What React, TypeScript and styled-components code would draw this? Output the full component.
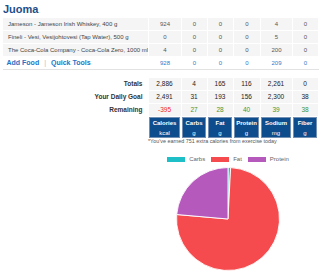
import React from "react";
import styled, { createGlobalStyle } from "styled-components";

const Global = createGlobalStyle`
  html, body { margin: 0; padding: 0; background: #fff; }
  body { font-family: "Liberation Sans", Arial, sans-serif; }
`;

const Page = styled.div`
  width: 320px;
  height: 272px;
  overflow: hidden;
  padding: 3px 2px 0 2px;
  box-sizing: border-box;
`;

const Title = styled.h2`
  margin: 0 0 2px 1px;
  font-size: 11px;
  line-height: 12px;
  font-weight: bold;
  color: #1b4f8c;
`;

const Table = styled.table`
  width: 316px;
  border-collapse: collapse;
  table-layout: fixed;
  font-size: 6px;
`;

const Row = styled.tr<{ $bg?: string }>`
  background: ${(p) => p.$bg ?? "transparent"};
`;

const NameCell = styled.td`
  height: 12px;
  line-height: 12px;
  padding: 0 0 0 5px;
  border: 1px solid #fff;
  color: #444;
  white-space: nowrap;
  overflow: hidden;
`;

const NumCell = styled.td`
  height: 12px;
  line-height: 12px;
  padding: 0;
  text-align: center;
  border: 1px solid #fff;
  color: #555;
`;

const ActionCell = styled.td`
  height: 12px;
  line-height: 12px;
  padding: 0 0 0 4px;
  border-bottom: 1px solid #e2e2e2;
  font-size: 7px;
  font-weight: bold;
  color: #2374c6;
  white-space: nowrap;
`;

const Sep = styled.span`
  color: #bbb;
  font-weight: normal;
  margin: 0 5px;
`;

const TotalNum = styled.td`
  height: 12px;
  line-height: 12px;
  border-bottom: 1px solid #e2e2e2;
  text-align: center;
  color: #3578c8;
  padding: 0;
`;

const Spacer = styled.div`
  height: 7px;
`;

const LabelCell = styled.td`
  height: 12px;
  line-height: 12px;
  padding: 0 5px 0 0;
  text-align: right;
  font-weight: bold;
  font-size: 6.5px;
  color: #333;
  background: #fff;
`;

const ValueCell = styled.td<{ $color?: string }>`
  height: 12px;
  line-height: 12px;
  padding: 0;
  text-align: center;
  font-size: 6.5px;
  color: ${(p) => p.$color ?? "#222"};
  border: 1px solid #fff;
`;

const HeadCell = styled.td`
  height: 21px;
  padding: 0;
  text-align: center;
  vertical-align: middle;
  background: #0d4c8d;
  color: #fff;
  font-size: 6px;
  line-height: 10px;
  border-left: 2px solid #fff;
  border-right: 2px solid #fff;
  box-shadow: inset 0 0 0 1px #7390b2;
`;

const HeadTitle = styled.div`
  font-weight: bold;
`;

const Note = styled.div`
  margin: 0 0 0 146px;
  font-size: 5.4px;
  line-height: 7px;
  color: #555;
  white-space: nowrap;
`;

const ChartBox = styled.div`
  margin: 11px 0 0 146px;
  width: 160px;
  display: flex;
  flex-direction: column;
  align-items: center;
`;

const Legend = styled.div`
  display: flex;
  gap: 6px;
  align-items: center;
  font-size: 6px;
  line-height: 7px;
  color: #666;
`;

const LegendItem = styled.div`
  display: flex;
  align-items: center;
  gap: 4px;
`;

const Swatch = styled.span<{ $c: string }>`
  display: inline-block;
  width: 18px;
  height: 5px;
  background: ${(p) => p.$c};
`;

const PieSvg = styled.svg`
  margin-top: 4px;
  display: block;
`;

const foods = [
  ["Jameson - Jameson Irish Whiskey, 400 g", "924", "0", "0", "0", "4", "0"],
  ["Fineli - Vesi, Vesijohtovesi (Tap Water), 500 g", "0", "0", "0", "0", "5", "0"],
  ["The Coca-Cola Company - Coca-Cola Zero, 1000 ml", "4", "0", "0", "0", "200", "0"],
];

const totalsRow = ["928", "0", "0", "0", "209", "0"];

const summary = [
  { label: "Totals", vals: ["2,886", "4", "165", "116", "2,261", "0"] },
  { label: "Your Daily Goal", vals: ["2,491", "31", "193", "156", "2,300", "38"] },
];

const remaining = ["-395", "27", "28", "40", "39", "38"];

const heads = [
  ["Calories", "kcal"],
  ["Carbs", "g"],
  ["Fat", "g"],
  ["Protein", "g"],
  ["Sodium", "mg"],
  ["Fiber", "g"],
];

const COLS = [146, 33, 26, 26, 27, 32, 26];

const Cols = () => (
  <colgroup>
    {COLS.map((w, i) => (
      <col key={i} style={{ width: w }} />
    ))}
  </colgroup>
);

const slices = [
  { label: "Carbs", value: 16, color: "#1fbfc8" },
  { label: "Fat", value: 1485, color: "#f64b4e" },
  { label: "Protein", value: 464, color: "#b659bd" },
];

function Pie() {
  const r = 51.5;
  const c = 52;
  const total = slices.reduce((a, s) => a + s.value, 0);
  let ang = -Math.PI / 2;
  return (
    <PieSvg width={104} height={104} viewBox="0 0 104 104">
      {slices.map((s) => {
        const a0 = ang;
        const a1 = ang + (s.value / total) * Math.PI * 2;
        ang = a1;
        const large = a1 - a0 > Math.PI ? 1 : 0;
        const x0 = c + r * Math.cos(a0);
        const y0 = c + r * Math.sin(a0);
        const x1 = c + r * Math.cos(a1);
        const y1 = c + r * Math.sin(a1);
        return (
          <path
            key={s.label}
            d={`M${c} ${c} L${x0} ${y0} A${r} ${r} 0 ${large} 1 ${x1} ${y1} Z`}
            fill={s.color}
            stroke="#fff"
            strokeWidth={0.9}
            strokeLinejoin="round"
          />
        );
      })}
    </PieSvg>
  );
}

export default function App() {
  return (
    <>
      <Global />
      <Page>
        <Title>Juoma</Title>
        <Table>
          <Cols />
          <tbody>
            {foods.map((f) => (
              <Row key={f[0]} $bg="#f5f5f5">
                <NameCell>{f[0]}</NameCell>
                {f.slice(1).map((v, i) => (
                  <NumCell key={i}>{v}</NumCell>
                ))}
              </Row>
            ))}
            <Row>
              <ActionCell>
                Add Food<Sep>|</Sep>Quick Tools
              </ActionCell>
              {totalsRow.map((v, i) => (
                <TotalNum key={i}>{v}</TotalNum>
              ))}
            </Row>
          </tbody>
        </Table>
        <Spacer />
        <Table>
          <Cols />
          <tbody>
            {summary.map((s) => (
              <Row key={s.label} $bg="#f5f5f5">
                <LabelCell>{s.label}</LabelCell>
                {s.vals.map((v, i) => (
                  <ValueCell key={i}>{v}</ValueCell>
                ))}
              </Row>
            ))}
            <Row $bg="#f5f5f5">
              <LabelCell>Remaining</LabelCell>
              {remaining.map((v, i) => (
                <ValueCell key={i} $color={v.startsWith("-") ? "#f2232a" : "#3f9433"}>
                  {v}
                </ValueCell>
              ))}
            </Row>
            <Row>
              <LabelCell />
              {heads.map(([t, u]) => (
                <HeadCell key={t}>
                  <HeadTitle>{t}</HeadTitle>
                  <div>{u}</div>
                </HeadCell>
              ))}
            </Row>
          </tbody>
        </Table>
        <Note>*You've earned 751 extra calories from exercise today</Note>
        <ChartBox>
          <Legend>
            {slices.map((s) => (
              <LegendItem key={s.label}>
                <Swatch $c={s.color} />
                {s.label}
              </LegendItem>
            ))}
          </Legend>
          <Pie />
        </ChartBox>
      </Page>
    </>
  );
}
